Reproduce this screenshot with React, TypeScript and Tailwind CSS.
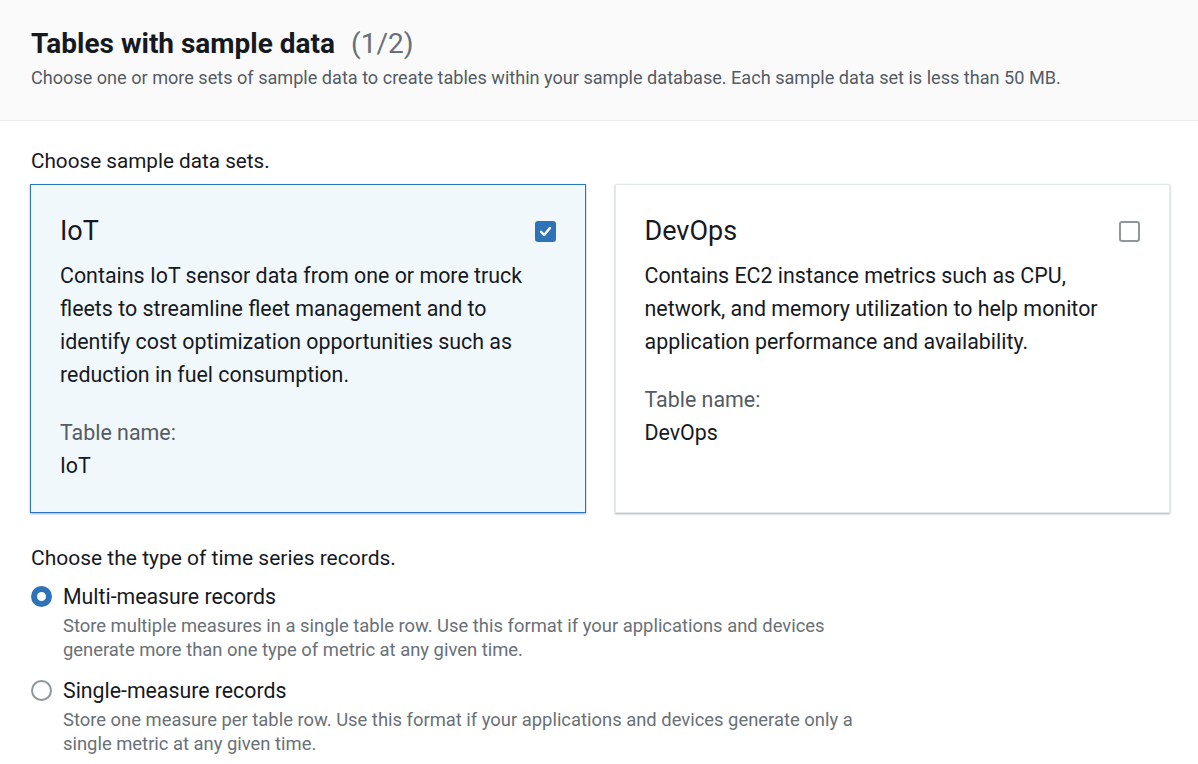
import React from "react";

const font = { fontFamily: "Roboto, 'Liberation Sans', sans-serif" };

function Checkbox({ checked }: { checked: boolean }) {
  if (checked) {
    return (
      <div className="w-[21px] h-[21px] rounded-[3px] bg-[#2e73b8] flex items-center justify-center">
        <svg width="15" height="15" viewBox="0 0 15 15">
          <path d="M3 7.8 L6.2 11 L12 4" fill="none" stroke="white" strokeWidth="2.4" strokeLinecap="round" strokeLinejoin="round" />
        </svg>
      </div>
    );
  }
  return <div className="w-[21px] h-[21px] rounded-[3px] border-2 border-[#8d989b] bg-white" />;
}

function Radio({ checked }: { checked: boolean }) {
  if (checked) {
    return <div className="w-[21px] h-[21px] rounded-full border-[6px] border-[#2e73b8] bg-white" />;
  }
  return <div className="w-[21px] h-[21px] rounded-full border-2 border-[#8d989b] bg-white" />;
}

function Card({
  title,
  lines,
  table,
  selected,
}: {
  title: string;
  lines: string[];
  table: string;
  selected: boolean;
}) {
  return (
    <div
      className={
        selected
          ? "border border-[#2b74c0] bg-[#f1f8fc] shadow-[0_1px_2px_rgba(0,28,36,0.35)] px-[29px] pt-[32px] pb-[30px]"
          : "border border-[#e4e7e8] bg-white shadow-[0_1px_2px_rgba(0,28,36,0.35)] px-[29px] pt-[32px] pb-[30px]"
      }
    >
      <div className="flex items-center justify-between h-[28px]">
        <div className="text-[27px] leading-[28px] text-[#16191f]">{title}</div>
        <Checkbox checked={selected} />
      </div>
      <div className="mt-[14px] text-[21.4px] leading-[33px] text-[#16191f]">
        {lines.map((l, i) => (
          <div key={i}>{l}</div>
        ))}
      </div>
      <div className="mt-[25px] text-[21.4px] leading-[33px] text-[#545b64]">Table name:</div>
      <div className="text-[21.4px] leading-[33px] text-[#16191f]">{table}</div>
    </div>
  );
}

function RadioOption({ checked, label, lines }: { checked: boolean; label: string; lines: string[] }) {
  return (
    <div className="flex">
      <div className="w-[32px] pt-[1px] flex-none">
        <Radio checked={checked} />
      </div>
      <div>
        <div className="text-[21.3px] leading-[24px] text-[#16191f]">{label}</div>
        <div className="mt-[5px] text-[18.4px] leading-[24px] text-[#687078]">
          {lines.map((l, i) => (
            <div key={i}>{l}</div>
          ))}
        </div>
      </div>
    </div>
  );
}

export default function App() {
  return (
    <div className="w-[1198px] h-[764px] bg-white overflow-hidden" style={font}>
      <div className="bg-[#fafafa] border-b border-[#e9ebed] h-[121px] px-[31px] pt-[27px]">
        <div className="flex items-baseline">
          <span className="text-[28px] leading-[34px] font-bold text-[#16191f]">Tables with sample data</span>
          <span className="ml-[16px] text-[28px] leading-[34px] text-[#687078]">(1/2)</span>
        </div>
        <div className="mt-[5px] text-[18.1px] leading-[24px] text-[#545b64]">
          Choose one or more sets of sample data to create tables within your sample database. Each sample data set is less than 50 MB.
        </div>
      </div>

      <div className="px-[30px] pt-[27px]">
        <div className="text-[20.7px] leading-[26px] text-[#16191f] pl-[1px]">Choose sample data sets.</div>
        <div className="mt-[10px] grid grid-cols-2 gap-[29px] w-[1140px]">
          <Card
            title="IoT"
            selected
            lines={[
              "Contains IoT sensor data from one or more truck",
              "fleets to streamline fleet management and to",
              "identify cost optimization opportunities such as",
              "reduction in fuel consumption.",
            ]}
            table="IoT"
          />
          <Card
            title="DevOps"
            selected={false}
            lines={[
              "Contains EC2 instance metrics such as CPU,",
              "network, and memory utilization to help monitor",
              "application performance and availability.",
            ]}
            table="DevOps"
          />
        </div>

        <div className="mt-[32px] text-[21px] leading-[26px] text-[#16191f] pl-[1px]">
          Choose the type of time series records.
        </div>
        <div className="mt-[14px] pl-[1px] flex flex-col gap-[17px]">
          <RadioOption
            checked
            label="Multi-measure records"
            lines={[
              "Store multiple measures in a single table row. Use this format if your applications and devices",
              "generate more than one type of metric at any given time.",
            ]}
          />
          <RadioOption
            checked={false}
            label="Single-measure records"
            lines={[
              "Store one measure per table row. Use this format if your applications and devices generate only a",
              "single metric at any given time.",
            ]}
          />
        </div>
      </div>
    </div>
  );
}
